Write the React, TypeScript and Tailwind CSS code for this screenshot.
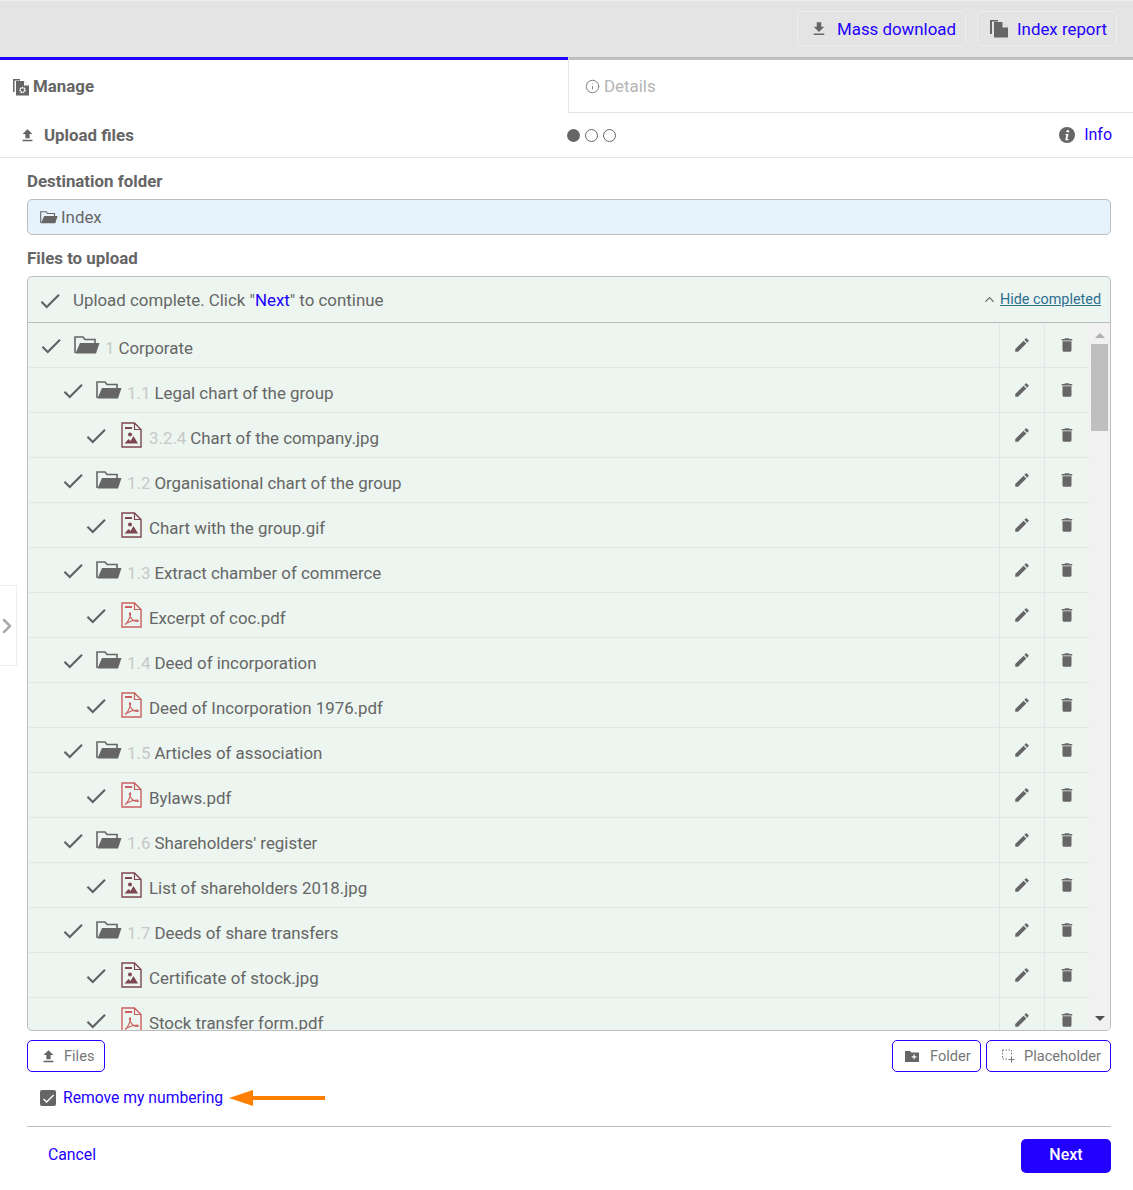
import React from 'react'
import { Info, ChevronRight, ChevronUp } from 'lucide-react'

const BLUE = 'text-[#2200ff]'

type Row = { level: number; type: 'folder' | 'image' | 'pdf'; num?: string; name: string }

const rows: Row[] = [
  { level: 0, type: 'folder', num: '1', name: 'Corporate' },
  { level: 1, type: 'folder', num: '1.1', name: 'Legal chart of the group' },
  { level: 2, type: 'image', num: '3.2.4', name: 'Chart of the company.jpg' },
  { level: 1, type: 'folder', num: '1.2', name: 'Organisational chart of the group' },
  { level: 2, type: 'image', name: 'Chart with the group.gif' },
  { level: 1, type: 'folder', num: '1.3', name: 'Extract chamber of commerce' },
  { level: 2, type: 'pdf', name: 'Excerpt of coc.pdf' },
  { level: 1, type: 'folder', num: '1.4', name: 'Deed of incorporation' },
  { level: 2, type: 'pdf', name: 'Deed of Incorporation 1976.pdf' },
  { level: 1, type: 'folder', num: '1.5', name: 'Articles of association' },
  { level: 2, type: 'pdf', name: 'Bylaws.pdf' },
  { level: 1, type: 'folder', num: '1.6', name: "Shareholders' register" },
  { level: 2, type: 'image', name: 'List of shareholders 2018.jpg' },
  { level: 1, type: 'folder', num: '1.7', name: 'Deeds of share transfers' },
  { level: 2, type: 'image', name: 'Certificate of stock.jpg' },
  { level: 2, type: 'pdf', name: 'Stock transfer form.pdf' },
]

const Mi = ({ d, className }: { d: string; className: string }) => (
  <svg viewBox="0 0 24 24" className={className} fill="currentColor">
    <path d={d} />
  </svg>
)

const UPLOAD = 'M9 16h6v-6h4l-7-7-7 7h4zm-4 2h14v2H5z'
const DOWNLOAD = 'M19 9h-4V3H9v6H5l7 7 7-7zM5 18v2h14v-2H5z'
const PENCIL =
  'M3 17.25V21h3.75L17.81 9.94l-3.75-3.75L3 17.25zM20.71 7.04c.39-.39.39-1.02 0-1.41l-2.34-2.34c-.39-.39-1.02-.39-1.41 0l-1.83 1.83 3.75 3.75 1.83-1.83z'
const TRASH = 'M6 19c0 1.1.9 2 2 2h8c1.1 0 2-.9 2-2V7H6v12zM19 4h-3.5l-1-1h-5l-1 1H5v2h14V4z'
const CHECK = 'M9 16.17L4.83 12l-1.42 1.41L9 19 21 7l-1.41-1.41z'

const Check = ({ className = 'w-[26px] h-[26px]' }: { className?: string }) => (
  <svg viewBox="0 0 24 24" className={`${className} text-[#5f6368]`} fill="currentColor">
    <path d={CHECK} />
  </svg>
)

const FolderOpen = ({ className }: { className: string }) => (
  <svg viewBox="0 0 26 19" className={className}>
    <path d="M1 18V2h8l2 2.5h10V8" fill="none" stroke="#666" strokeWidth="1.6" />
    <path d="M6 8h19.5L22 18.500H1.5z" fill="#666" />
  </svg>
)

const ImageFile = () => (
  <svg viewBox="0 0 21 26" className="w-[21px] h-[26px]">
    <path d="M1 1h12.5L20 7.5V25H1z" fill="none" stroke="#7d4650" strokeWidth="1.4" />
    <path d="M13.5 1v6.5H20" fill="none" stroke="#7d4650" strokeWidth="1.2" />
    <path d="M4 5h7v2H4z" fill="#7d4650" />
    <circle cx="9" cy="12.5" r="2" fill="#7d4650" />
    <path d="M3.500 21.500l4-4.500 2 2 3-5 4.500 7.500z" fill="#7d4650" />
  </svg>
)

const PdfFile = () => (
  <svg viewBox="0 0 21 26" className="w-[21px] h-[26px]">
    <path d="M1 1h12.5L20 7.5V25H1z" fill="none" stroke="#c9605f" strokeWidth="1.4" />
    <path d="M13.500 1v6.5H20" fill="none" stroke="#c9605f" strokeWidth="1.2" />
    <path d="M4 4h7v2H4z" fill="#c9605f" />
    <path
      d="M4 22.500c2-1 4-5 5.500-9.500.4-1.500-.2-2.500-.8-2-.6.6 0 3 1.800 5.500 1.500 2 4 3 6 3 1.200 0 1-1.500-.5-1.500-3 0-7 1.200-10 3-1.500 1-2 1.500-2 1.500z"
      fill="none"
      stroke="#c9605f"
      strokeWidth="1.100"
    />
  </svg>
)

const levelPad = ['pl-[10px]', 'pl-[32px]', 'pl-[55px]']

function ListRow({ row }: { row: Row }) {
  return (
    <div className="flex h-[45px] shrink-0 border-b border-[#e5e5e5]">
      <div className={`flex-1 flex items-center ${levelPad[row.level]}`}>
        <span className="mt-[2px]">
          <Check />
        </span>
        {row.type === 'folder' ? (
          <span className="ml-[10px] mt-[-2px]">
            <FolderOpen className="w-[26px] h-[19px]" />
          </span>
        ) : (
          <span className="ml-[12px]">{row.type === 'image' ? <ImageFile /> : <PdfFile />}</span>
        )}
        <span className={`${row.type === 'folder' ? 'ml-[5px]' : 'ml-[7px]'} mt-[7px] text-[#666]`}>
          {row.num && <span className="text-[#c8c8c8] mr-[4px]">{row.num}</span>}
          {row.name}
        </span>
      </div>
      <div className="w-[45px] border-l border-[#e5e5e5] flex items-center justify-center pb-[1px]">
        <Mi d={PENCIL} className="w-[18px] h-[18px] text-[#666]" />
      </div>
      <div className="w-[45px] border-l border-[#e5e5e5] flex items-center justify-center pb-[1px]">
        <Mi d={TRASH} className="w-[18px] h-[18px] text-[#666]" />
      </div>
    </div>
  )
}

function OutlineButton({ icon, label, className }: { icon: React.ReactNode; label: string; className: string }) {
  return (
    <button className={`h-[32px] flex items-center border border-[#2200ff] rounded-[5px] text-[14.6px] text-[#777] ${className}`}>
      {icon}
      <span className="pt-[2px]">{label}</span>
    </button>
  )
}

export default function App() {
  return (
    <div className="relative w-[1133px] h-[1190px] bg-white text-[16.88px] text-[#666] overflow-hidden" style={{ fontFamily: 'Roboto, sans-serif' }}>
      {/* Top bar */}
      <div className="h-[57px] bg-[#e4e4e4] border-t border-[#efefef] flex items-start justify-end gap-[11px] pt-[10px] pr-[16px]">
        <button className="h-[35px] w-[169px] flex items-center border border-[#eeeeee] rounded-[5px] pl-[12px]">
          <Mi d={DOWNLOAD} className="w-[18px] h-[18px] text-[#666]" />
          <span className={`ml-[9px] pt-[2px] ${BLUE}`}>Mass download</span>
        </button>
        <button className="h-[35px] w-[140px] flex items-center border border-[#eeeeee] rounded-[5px] pl-[12px]">
          <svg viewBox="0 0 18 19" className="w-[18px] h-[19px]">
            <path d="M0 1h8v1.500H2V15H0z" fill="#666" />
            <path d="M4 3h8l6 5.500V18.500H4z" fill="#666" />
            <path d="M12.500 3v5.500H18z" fill="#e4e4e4" />
          </svg>
          <span className={`ml-[9px] pt-[2px] ${BLUE}`}>Index report</span>
        </button>
      </div>

      {/* Tabs */}
      <div className="flex h-[56px]">
        <div className="w-[568px] border-t-[3px] border-[#2200ff] flex items-center pl-[13px]">
          <svg viewBox="0 0 18 18" className="w-[18px] h-[18px]">
            <path d="M0 1h7v1.500H1.500V14H0z" fill="#666" />
            <path d="M3 3h8l5 4.500V17.500H3z" fill="#666" />
            <path d="M11 3v4.500h5z" fill="#fff" />
            <circle cx="9.500" cy="12" r="2.400" fill="none" stroke="#fff" strokeWidth="1.600" strokeDasharray="1.400 0.500" />
          </svg>
          <span className="ml-[2px] pt-[1px] font-bold">Manage</span>
        </div>
        <div className="flex-1 border-t-[3px] border-t-[#bfbfbf] border-l border-l-[#e5e5e5] border-b border-b-[#e5e5e5] flex items-center pl-[16px] text-[#b5b5b5]">
          <Info className="w-[15px] h-[15px] text-[#777]" strokeWidth={1.500} />
          <span className="ml-[4px] pt-[1px]">Details</span>
        </div>
      </div>

      {/* Upload header */}
      <div className="h-[45px] border-b border-[#e5e5e5] flex items-center pl-[19px] pr-[21px]">
        <Mi d={UPLOAD} className="w-[17px] h-[17px] text-[#666]" />
        <span className="ml-[8px] pt-[2px] font-bold">Upload files</span>
        <div className="ml-[433px] flex gap-[5px]">
          <span className="w-[13px] h-[13px] rounded-full bg-[#666]" />
          <span className="w-[13px] h-[13px] rounded-full border border-[#666]" />
          <span className="w-[13px] h-[13px] rounded-full border border-[#666]" />
        </div>
        <div className="ml-auto flex items-center">
          <svg viewBox="0 0 16 16" className="w-[16px] h-[16px]">
            <circle cx="8" cy="8" r="8" fill="#666" />
            <circle cx="8.800" cy="4.200" r="1.300" fill="#fff" />
            <path d="M6.500 7h3l-1.200 5h1.200v1.200H6.200l1.200-5H6.500z" fill="#fff" />
          </svg>
          <span className={`ml-[9px] text-[16px] ${BLUE}`}>Info</span>
        </div>
      </div>

      {/* Body */}
      <div className="pr-[22px] pl-[27px]">
        <div className="mt-[14px] h-[20px] leading-[18px] font-bold">Destination folder</div>
        <div className="mt-[7px] h-[36px] bg-[#e6f3fd] border border-[#bdbdbd] rounded-[5px] flex items-center pl-[12px]">
          <FolderOpen className="w-[18px] h-[14px]" />
          <span className="ml-[3px] pt-[1px]">Index</span>
        </div>
        <div className="mt-[13px] h-[20px] leading-[20px] font-bold">Files to upload</div>

        {/* Upload list */}
        <div className="mt-[8px] h-[755px] bg-[#ecf5ef] border border-[#bdbdbd] rounded-[5px] overflow-hidden flex flex-col">
          <div className="h-[46px] shrink-0 border-b border-[#bdbdbd] flex items-center pl-[9px] pr-[9px] pt-[2px]">
            <Check />
            <span className="ml-[10px]">
              Upload complete. Click "<span className={BLUE}>Next</span>" to continue
            </span>
            <span className="ml-auto -mt-[1px] flex items-center text-[14.4px] text-[#2f6f8f]">
              <ChevronUp className="w-[15px] h-[15px] text-[#666] mr-[3px]" strokeWidth={2} />
              <span className="underline">Hide completed</span>
            </span>
          </div>
          <div className="flex flex-1 min-h-0">
            <div className="flex-1 flex flex-col overflow-hidden">
              {rows.map((row, i) => (
                <ListRow key={i} row={row} />
              ))}
            </div>
            <div className="w-[21px] bg-[#f1f1f1] flex flex-col items-center">
              <span className="mt-[10px] w-0 h-0 border-x-[5px] border-x-transparent border-b-[5px] border-b-[#b0b0b0]" />
              <span className="mt-[6px] w-[17px] h-[87px] bg-[#bfbfbf]" />
              <span className="mt-auto mb-[9px] w-0 h-0 border-x-[5px] border-x-transparent border-t-[5px] border-t-[#505050]" />
            </div>
          </div>
        </div>

        {/* Add buttons */}
        <div className="mt-[9px] flex gap-[5px]">
          <OutlineButton
            className="w-[78px] pl-[12px]"
            label="Files"
            icon={<Mi d={UPLOAD} className="w-[17px] h-[17px] text-[#666] mr-[7px]" />}
          />
          <OutlineButton
            className="w-[89px] pl-[12px] ml-auto"
            label="Folder"
            icon={
              <svg viewBox="0 0 14 11" className="w-[14px] h-[11px] mr-[11px]">
                <path d="M0 0h5l1.500 1.500H14V11H0z" fill="#666" />
                <path d="M8.500 3.500h1.200v1.800h1.800v1.200H9.700v1.800H8.500V6.500H6.700V5.300h1.800z" fill="#fff" />
              </svg>
            }
          />
          <OutlineButton
            className="w-[125px] pl-[15px]"
            label="Placeholder"
            icon={
              <svg viewBox="0 0 13 14" className="w-[13px] h-[14px] mr-[9px]" fill="none" stroke="#777" strokeWidth="1">
                <path d="M0.500 1h9v6M0.500 1v9h5" strokeDasharray="1.500 1.500" />
                <path d="M9.500 7.500v6M6.500 10.500h6" />
              </svg>
            }
          />
        </div>

        {/* Numbering option */}
        <div className="mt-[18px] h-[16px] flex items-center pl-[13px]">
          <span className="w-[16px] h-[16px] rounded-[2px] bg-[#666] flex items-center justify-center">
            <Mi d={CHECK} className="w-[15px] h-[15px] text-white" />
          </span>
          <span className={`ml-[7px] text-[15.7px] ${BLUE}`}>Remove my numbering</span>
          <svg viewBox="0 0 96 16" className="ml-[6px] w-[96px] h-[16px]">
            <path d="M0 8l24-8v6h72v4H24v6z" fill="#ff8000" />
          </svg>
        </div>

        {/* Footer */}
        <div className="mt-[20px] border-t border-[#bdbdbd] pt-[12px] flex items-center justify-between">
          <span className={`ml-[21px] -mt-[2px] text-[15.8px] ${BLUE}`}>Cancel</span>
          <button className="w-[90px] h-[34px] rounded-[5px] bg-[#2200ff] text-white text-[16px] font-medium pb-[2px]">Next</button>
        </div>
      </div>

      {/* Collapsed side panel toggle */}
      <div className="absolute left-0 top-[585px] w-[17px] h-[81px] bg-white border border-l-0 border-[#eeeeee] flex items-center">
        <ChevronRight className="w-[24px] h-[24px] -ml-[5px] shrink-0 text-[#aaa]" strokeWidth={2.500} />
      </div>
    </div>
  )
}
